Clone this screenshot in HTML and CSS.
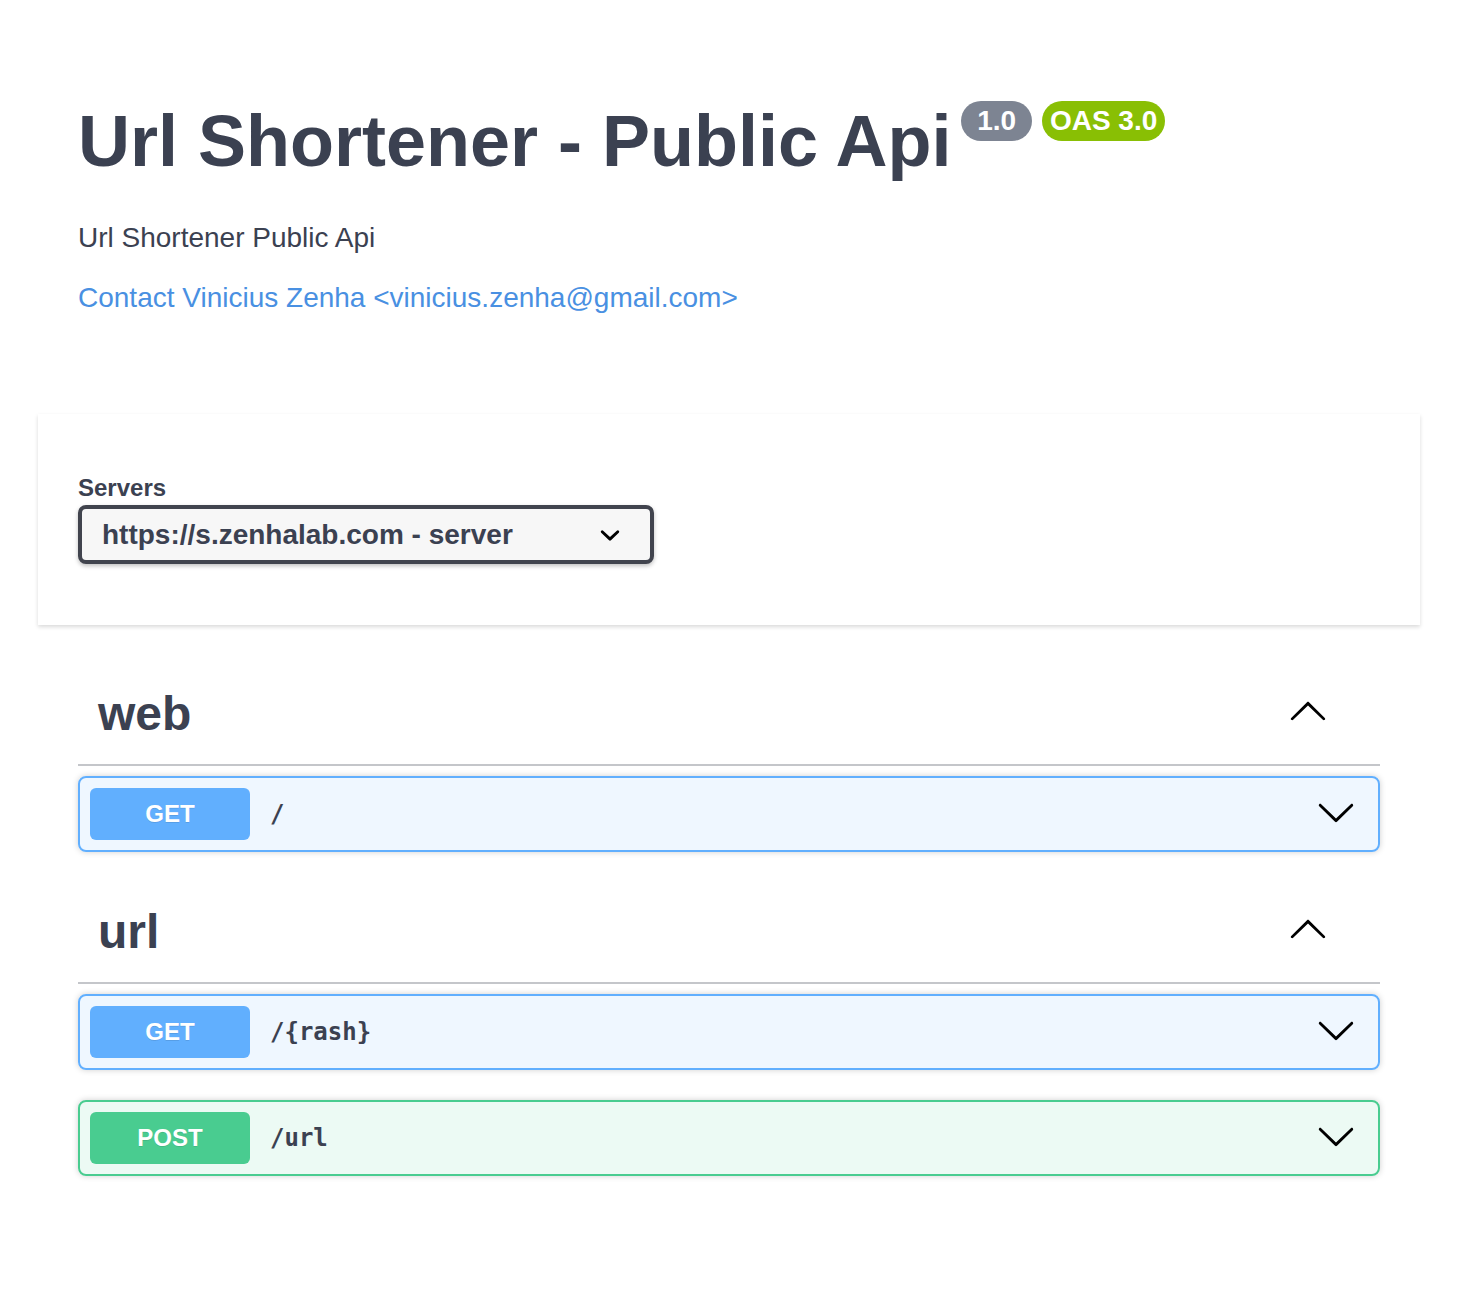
FILE: index.html
```html
<!DOCTYPE html>
<html lang="en">
<head>
<meta charset="utf-8">
<title>Url Shortener - Public Api</title>
<link rel="stylesheet" href="styles.css">
</head>
<body>
<div class="page">
  <div class="wrapper info">
    <h2 class="title">Url Shortener - Public Api<span class="badge badge-version"> 1.0 </span><span class="badge badge-oas">OAS 3.0</span></h2>
    <p class="desc">Url Shortener Public Api</p>
    <a class="contact" href="#">Contact Vinicius Zenha &lt;vinicius.zenha@gmail.com&gt;</a>
  </div>

  <div class="scheme">
    <div class="wrapper">
      <span class="servers-title">Servers</span>
      <div class="select">
        <span>https://s.zenhalab.com - server</span>
        <svg class="select-arrow" viewBox="0 0 20 20" width="40" height="40"><path d="M13.418 7.859a.695.695 0 01.978 0 .68.68 0 010 .969l-3.908 3.83a.697.697 0 01-.979 0l-3.908-3.830a.68.68 0 010-.969.695.695 0 01.978 0L10 11l3.418-3.141z"/></svg>
      </div>
    </div>
  </div>

  <div class="wrapper ops">
    <section class="tag-section">
      <div class="tag">
        <h3 class="tag-name">web</h3>
        <svg class="arrow tag-arrow" viewBox="0 0 20 20" width="40" height="40"><path d="M17.418 14.908c.272.268.709.268.979 0s.271-.701 0-.969l-7.908-7.83c-.27-.268-.707-.268-.979 0l-7.908 7.83c-.27.268-.27.701 0 .969.271.268.709.268.979 0L10 7.771l7.418 7.137z"/></svg>
      </div>
      <div class="opblock opblock-get">
        <span class="method">GET</span>
        <span class="path">/</span>
        <svg class="arrow op-arrow" viewBox="0 0 20 20" width="40" height="40"><path d="M17.418 6.109c.272-.268.709-.268.979 0s.271.701 0 .969l-7.908 7.83c-.27.268-.707.268-.979 0l-7.908-7.83c-.27-.268-.27-.701 0-.969.271-.268.709-.268.979 0L10 13.25l7.418-7.141z"/></svg>
      </div>
    </section>

    <section class="tag-section">
      <div class="tag">
        <h3 class="tag-name">url</h3>
        <svg class="arrow tag-arrow" viewBox="0 0 20 20" width="40" height="40"><path d="M17.418 14.908c.272.268.709.268.979 0s.271-.701 0-.969l-7.908-7.83c-.27-.268-.707-.268-.979 0l-7.908 7.83c-.27.268-.27.701 0 .969.271.268.709.268.979 0L10 7.771l7.418 7.137z"/></svg>
      </div>
      <div class="opblock opblock-get">
        <span class="method">GET</span>
        <span class="path">/{rash}</span>
        <svg class="arrow op-arrow" viewBox="0 0 20 20" width="40" height="40"><path d="M17.418 6.109c.272-.268.709-.268.979 0s.271.701 0 .969l-7.908 7.83c-.27.268-.707.268-.979 0l-7.908-7.83c-.27-.268-.27-.701 0-.969.271-.268.709-.268.979 0L10 13.25l7.418-7.141z"/></svg>
      </div>
      <div class="opblock opblock-post">
        <span class="method">POST</span>
        <span class="path">/url</span>
        <svg class="arrow op-arrow" viewBox="0 0 20 20" width="40" height="40"><path d="M17.418 6.109c.272-.268.709-.268.979 0s.271.701 0 .969l-7.908 7.83c-.27.268-.707.268-.979 0l-7.908-7.83c-.27-.268-.27-.701 0-.969.271-.268.709-.268.979 0L10 13.25l7.418-7.141z"/></svg>
      </div>
    </section>
  </div>
</div>
</body>
</html>
```

FILE: styles.css
```css
html, body {
  margin: 0;
  padding: 0;
  background: #fff;
}

body {
  font-family: "Liberation Sans", Arial, sans-serif;
  color: #3b4151;
}

.page {
  padding: 0 38px 80px;
}

.wrapper {
  padding: 0 40px;
}

/* Info */
.info {
  padding-top: 100px;
  padding-bottom: 100px;
}

.title {
  margin: 0;
  font-size: 72px;
  line-height: 83px;
  font-weight: 700;
  color: #3b4151;
}

.badge {
  display: inline-block;
  vertical-align: top;
  margin-top: 1px;
  margin-left: 10px;
  padding: 4px 8px;
  border-radius: 57px;
  font-size: 28px;
  line-height: 32px;
  font-weight: 700;
  color: #fff;
  white-space: pre;
}

.badge-version {
  background: #7d8492;
}

.badge-oas {
  background: #89bf04;
}

.desc {
  margin: 39px 0 0;
  font-size: 28px;
  line-height: 32px;
  color: #3b4151;
}

.contact {
  display: block;
  margin-top: 28px;
  font-size: 28px;
  line-height: 32px;
  color: #4990e2;
  text-decoration: none;
}

/* Servers */
.scheme {
  background: #fff;
  padding: 60px 0 61px;
  box-shadow: 0 2px 4px 0 rgba(0, 0, 0, 0.15);
  margin-bottom: 39px;
}

.servers-title {
  display: block;
  font-size: 24px;
  line-height: 28px;
  font-weight: 700;
  color: #3b4151;
  margin-bottom: 3px;
}

.select {
  display: flex;
  align-items: center;
  justify-content: space-between;
  box-sizing: border-box;
  width: 576px;
  height: 59px;
  padding: 0 20px;
  border: 4px solid #41444e;
  border-radius: 8px;
  background: #f7f7f7;
  box-shadow: 0 2px 4px 0 rgba(0, 0, 0, 0.25);
  font-size: 28px;
  font-weight: 700;
  color: #3b4151;
}

.select-arrow {
  display: block;
  fill: #000;
}

/* Tags */
.tag {
  display: flex;
  align-items: center;
  justify-content: space-between;
  padding: 20px 40px 20px 20px;
  border-bottom: 2px solid rgba(59, 65, 81, 0.3);
  margin-bottom: 10px;
}

.tag-name {
  margin: 0;
  font-size: 48px;
  line-height: 60px;
  font-weight: 700;
  color: #3b4151;
}

.arrow {
  display: block;
  fill: #000;
}

.tag-arrow {
  margin-right: 12px;
  margin-top: -8px;
}

/* Operations */
.opblock {
  display: flex;
  align-items: center;
  padding: 10px;
  border: 2px solid;
  border-radius: 8px;
  box-shadow: 0 0 6px rgba(0, 0, 0, 0.19);
  margin-bottom: 30px;
}

.opblock-get {
  border-color: #61affe;
  background: rgba(97, 175, 254, 0.1);
}

.opblock-post {
  border-color: #49cc90;
  background: rgba(73, 204, 144, 0.1);
}

.method {
  display: block;
  width: 160px;
  height: 52px;
  line-height: 52px;
  text-align: center;
  border-radius: 6px;
  font-size: 24px;
  font-weight: 700;
  color: #fff;
  text-shadow: 0 1px 0 rgba(0, 0, 0, 0.1);
}

.opblock-get .method {
  background: #61affe;
}

.opblock-post .method {
  background: #49cc90;
}

.path {
  flex: 1;
  padding: 0 20px;
  font-family: "DejaVu Sans Mono", monospace;
  font-size: 24px;
  line-height: 30px;
  font-weight: 700;
  color: #3b4151;
}

.op-arrow {
  margin-right: 12px;
  margin-top: -4px;
}
```
